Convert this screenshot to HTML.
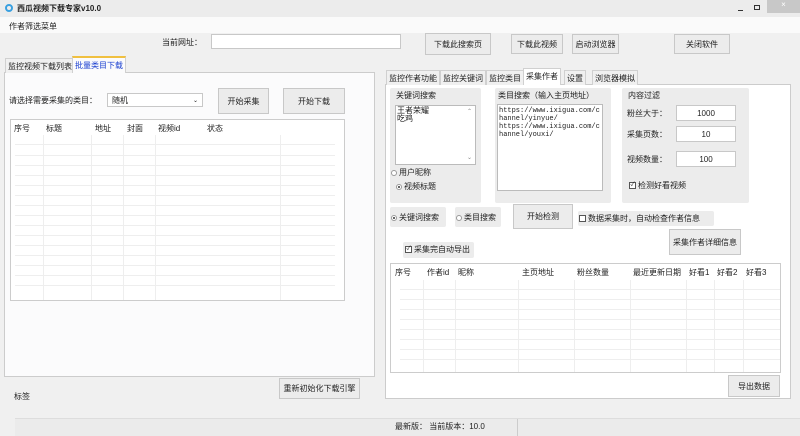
<!DOCTYPE html>
<html><head><meta charset="utf-8"><style>
*{box-sizing:border-box;margin:0;padding:0}
body{width:800px;height:436px;overflow:hidden;background:#f0f0f0;font-family:"Liberation Sans","Noto Sans CJK SC",sans-serif;font-size:8px;color:#222;position:relative}
.a{position:absolute}
.btn{position:absolute;background:#ececec;border:1px solid #c8c8c8;display:flex;align-items:center;justify-content:center;font-size:8px;color:#222}
.inp{position:absolute;background:#fff;border:1px solid #c8c8c8;font-size:8px;display:flex;align-items:center;justify-content:center}
.tab{position:absolute;font-size:8px;border:1px solid #d0d0d0;border-bottom:none;background:#f0f0f0;padding:2px 2px 0;height:15px;white-space:nowrap}
.grp{position:absolute;background:#ececec;border-radius:2px}
.vl{position:absolute;width:1px;background:#eee}
.hl{position:absolute;height:1px;background:#eee}
.mono{font-family:"Liberation Mono",monospace;font-size:7px;line-height:8px}
.rad{display:inline-block;width:6px;height:6px;border:1px solid #999;border-radius:50%;vertical-align:middle;margin-right:2px;background:#fff;position:relative}
.rad.on::after{content:"";position:absolute;left:1px;top:1px;width:2px;height:2px;background:#333;border-radius:50%}
.chk{display:inline-block;width:7px;height:7px;border:1px solid #555;vertical-align:middle;margin-right:2px;background:#fff;font-size:6px;line-height:5px;text-align:center}
</style></head><body>
<!-- title bar -->
<div class="a" style="left:0;top:0;width:800px;height:17px;background:#ececec"></div>
<div class="a" style="left:5px;top:4px;width:8px;height:8px;border-radius:50%;border:2px solid #3aa0e0"></div>
<div class="a" style="left:17px;top:3px;font-size:8px;font-weight:bold">西瓜视频下载专家v10.0</div>
<div class="a" style="left:738px;top:4px;width:5px;height:1px;background:#333;top:10px"></div>
<div class="a" style="left:754px;top:5px;width:6px;height:5px;border:1px solid #333"></div>
<div class="a" style="left:767px;top:0;width:33px;height:13px;background:#c8c8c8;color:#fff;text-align:center;font-size:8px">×</div>
<div class="a" style="left:0;top:17px;width:800px;height:16px;background:#fafafa"></div>
<div class="a" style="left:9px;top:21px">作者筛选菜单</div>
<!-- top row -->
<div class="a" style="left:162px;top:37px">当前网址：</div>
<div class="inp" style="left:211px;top:34px;width:190px;height:15px"></div>
<div class="btn" style="left:425px;top:33px;width:66px;height:22px">下载此搜索页</div>
<div class="btn" style="left:511px;top:34px;width:52px;height:20px">下载此视频</div>
<div class="btn" style="left:572px;top:34px;width:47px;height:20px">启动浏览器</div>
<div class="btn" style="left:674px;top:34px;width:56px;height:20px">关闭软件</div>
<!-- left tabs -->
<div class="a" style="left:4px;top:72px;width:371px;height:305px;background:#fbfbfc;border:1px solid #ccc"></div>
<div class="tab" style="left:5px;top:58px">监控视频下载列表</div>
<div class="tab" style="left:72px;top:56px;height:17px;background:#fbfbfc;color:#1a3fd0;border-top:2px solid #f0c040">批量类目下载</div>
<div class="a" style="left:9px;top:95px">请选择需要采集的类目：</div>
<div class="inp" style="left:107px;top:93px;width:96px;height:14px;justify-content:space-between;padding:0 4px"><span>随机</span><span style="font-size:6px">⌄</span></div>
<div class="btn" style="left:218px;top:88px;width:51px;height:26px">开始采集</div>
<div class="btn" style="left:283px;top:88px;width:62px;height:26px">开始下载</div>
<div class="a" style="left:10px;top:119px;width:335px;height:182px;background:#fff;border:1px solid #ccc"></div>
<div class="a" style="left:14px;top:123px">序号</div><div class="a" style="left:46px;top:123px">标题</div><div class="a" style="left:95px;top:123px">地址</div><div class="a" style="left:127px;top:123px">封面</div><div class="a" style="left:158px;top:123px">视频id</div><div class="a" style="left:207px;top:123px">状态</div>
<div class="vl" style="left:43px;top:135px;height:165px"></div><div class="vl" style="left:91px;top:135px;height:165px"></div><div class="vl" style="left:123px;top:135px;height:165px"></div><div class="vl" style="left:155px;top:135px;height:165px"></div><div class="vl" style="left:280px;top:135px;height:165px"></div>
<div class="hl" style="left:15px;top:144px;width:320px"></div><div class="hl" style="left:15px;top:155px;width:320px"></div><div class="hl" style="left:15px;top:165px;width:320px"></div><div class="hl" style="left:15px;top:175px;width:320px"></div><div class="hl" style="left:15px;top:185px;width:320px"></div><div class="hl" style="left:15px;top:195px;width:320px"></div><div class="hl" style="left:15px;top:205px;width:320px"></div><div class="hl" style="left:15px;top:215px;width:320px"></div><div class="hl" style="left:15px;top:225px;width:320px"></div><div class="hl" style="left:15px;top:235px;width:320px"></div><div class="hl" style="left:15px;top:245px;width:320px"></div><div class="hl" style="left:15px;top:255px;width:320px"></div><div class="hl" style="left:15px;top:265px;width:320px"></div><div class="hl" style="left:15px;top:275px;width:320px"></div><div class="hl" style="left:15px;top:285px;width:320px"></div>
<div class="btn" style="left:279px;top:378px;width:81px;height:21px">重新初始化下载引擎</div>
<div class="a" style="left:14px;top:391px">标签</div>
<!-- right tabs -->
<div class="a" style="left:385px;top:84px;width:406px;height:315px;background:#fff;border:1px solid #ccc"></div>
<div class="tab" style="left:386px;top:70px">监控作者功能</div>
<div class="tab" style="left:440px;top:70px">监控关键词</div>
<div class="tab" style="left:486px;top:70px">监控类目</div>
<div class="tab" style="left:523px;top:68px;height:17px;background:#fff">采集作者</div>
<div class="tab" style="left:564px;top:70px">设置</div>
<div class="tab" style="left:592px;top:70px">浏览器模拟</div>
<!-- group 1 -->
<div class="grp" style="left:390px;top:88px;width:91px;height:115px"></div>
<div class="a" style="left:396px;top:90px">关键词搜索</div>
<div class="a" style="left:395px;top:105px;width:81px;height:60px;background:#fff;border:1px solid #bbb;line-height:8px;padding:1px">王者荣耀<br>吃鸡<span class="a" style="right:3px;top:2px;font-size:6px;color:#888">⌃</span><span class="a" style="right:3px;bottom:2px;font-size:6px;color:#888">⌄</span></div>
<div class="a" style="left:391px;top:167px"><span class="rad"></span>用户昵称</div>
<div class="a" style="left:396px;top:181px"><span class="rad on"></span>视频标题</div>
<!-- group 2 -->
<div class="grp" style="left:495px;top:88px;width:116px;height:115px"></div>
<div class="a" style="left:498px;top:90px">类目搜索（输入主页地址）</div>
<div class="a mono" style="left:497px;top:104px;width:106px;height:87px;background:#fff;border:1px solid #bbb;padding:2px 1px">https://www.ixigua.com/c<br>hannel/yinyue/<br>https://www.ixigua.com/c<br>hannel/youxi/</div>
<!-- group 3 -->
<div class="grp" style="left:622px;top:88px;width:127px;height:115px"></div>
<div class="a" style="left:628px;top:90px">内容过滤</div>
<div class="a" style="left:627px;top:108px">粉丝大于：</div><div class="inp" style="left:676px;top:105px;width:60px;height:16px">1000</div>
<div class="a" style="left:627px;top:129px">采集页数：</div><div class="inp" style="left:676px;top:126px;width:60px;height:16px">10</div>
<div class="a" style="left:627px;top:154px">视频数量：</div><div class="inp" style="left:676px;top:151px;width:60px;height:16px">100</div>
<div class="a" style="left:629px;top:180px"><span class="chk">✓</span>检测好看视频</div>
<!-- row -->
<div class="grp" style="left:390px;top:207px;width:56px;height:20px"></div>
<div class="a" style="left:391px;top:212px"><span class="rad on"></span>关键词搜索</div>
<div class="grp" style="left:455px;top:207px;width:46px;height:20px"></div>
<div class="a" style="left:456px;top:212px"><span class="rad"></span>类目搜索</div>
<div class="btn" style="left:513px;top:204px;width:60px;height:25px">开始检测</div>
<div class="grp" style="left:578px;top:211px;width:136px;height:15px"></div>
<div class="a" style="left:579px;top:213px"><span class="chk"></span>数据采集时，自动检查作者信息</div>
<div class="btn" style="left:669px;top:229px;width:72px;height:26px">采集作者详细信息</div>
<div class="grp" style="left:403px;top:242px;width:71px;height:16px"></div>
<div class="a" style="left:405px;top:244px"><span class="chk">✓</span>采集完自动导出</div>
<!-- table -->
<div class="a" style="left:390px;top:263px;width:391px;height:110px;background:#fff;border:1px solid #ccc"></div>
<div class="a" style="left:395px;top:267px">序号</div><div class="a" style="left:427px;top:267px">作者id</div><div class="a" style="left:458px;top:267px">昵称</div><div class="a" style="left:522px;top:267px">主页地址</div><div class="a" style="left:577px;top:267px">粉丝数量</div><div class="a" style="left:633px;top:267px">最近更新日期</div><div class="a" style="left:689px;top:267px">好看1</div><div class="a" style="left:717px;top:267px">好看2</div><div class="a" style="left:746px;top:267px">好看3</div>
<div class="vl" style="left:423px;top:280px;height:92px"></div><div class="vl" style="left:455px;top:280px;height:92px"></div><div class="vl" style="left:518px;top:280px;height:92px"></div><div class="vl" style="left:574px;top:280px;height:92px"></div><div class="vl" style="left:630px;top:280px;height:92px"></div><div class="vl" style="left:686px;top:280px;height:92px"></div><div class="vl" style="left:714px;top:280px;height:92px"></div><div class="vl" style="left:743px;top:280px;height:92px"></div>
<div class="hl" style="left:400px;top:289px;width:380px"></div><div class="hl" style="left:400px;top:299px;width:380px"></div><div class="hl" style="left:400px;top:309px;width:380px"></div><div class="hl" style="left:400px;top:319px;width:380px"></div><div class="hl" style="left:400px;top:329px;width:380px"></div><div class="hl" style="left:400px;top:339px;width:380px"></div><div class="hl" style="left:400px;top:349px;width:380px"></div><div class="hl" style="left:400px;top:359px;width:380px"></div>
<div class="btn" style="left:728px;top:375px;width:52px;height:22px">导出数据</div>
<!-- status -->
<div class="a" style="left:15px;top:418px;width:785px;height:18px;background:#ebebeb;border-top:1px solid #ddd"></div>
<div class="a" style="left:517px;top:419px;width:1px;height:17px;background:#ccc"></div>
<div class="a" style="left:395px;top:421px">最新版：&nbsp;当前版本：10.0</div>
</body></html>
